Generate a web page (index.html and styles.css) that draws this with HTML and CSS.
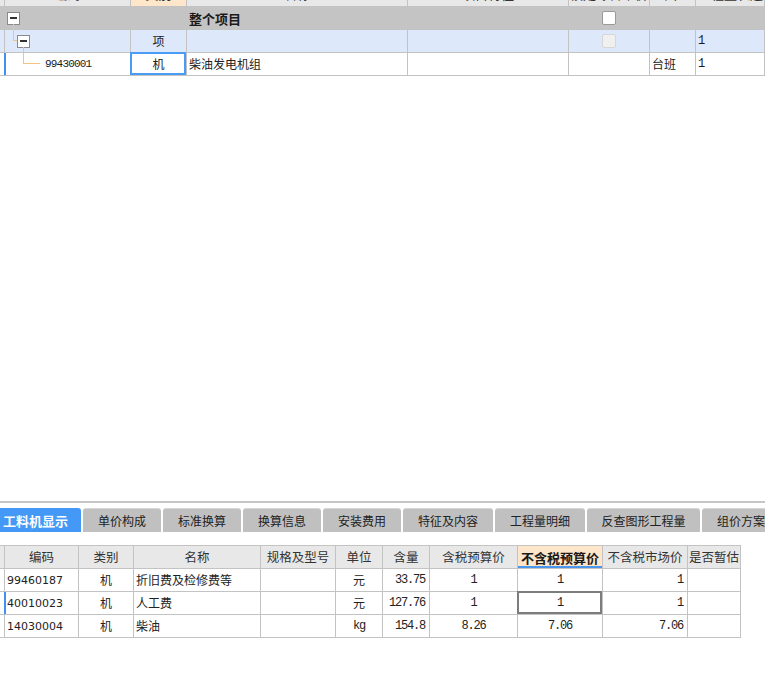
FILE: index.html
```html
<!DOCTYPE html>
<html lang="zh">
<head>
<meta charset="utf-8">
<title>工料机显示</title>
<link rel="stylesheet" href="styles.css">
</head>
<body>
<div class="app">
  <div class="tree-grid">
    <div class="tg-row tg-head">
      <div class="c"></div>
      <div class="c center">编码</div>
      <div class="c center active-col">类别</div>
      <div class="c center">名称</div>
      <div class="c center">项目特征</div>
      <div class="c center">锁定综合单价</div>
      <div class="c center">单位</div>
      <div class="c">工程量表达式</div>
    </div>
    <div class="tg-row tg-group">
      <div class="c"></div>
      <div class="c tree l0"><span class="toggle"></span></div>
      <div class="c"></div>
      <div class="c bold">整个项目</div>
      <div class="c"></div>
      <div class="c center"><span class="chk"></span></div>
      <div class="c"></div>
      <div class="c"></div>
    </div>
    <div class="tg-row tg-sub">
      <div class="c"></div>
      <div class="c tree l1"><span class="elbow e1"></span><span class="toggle"></span></div>
      <div class="c center">项</div>
      <div class="c"></div>
      <div class="c"></div>
      <div class="c center"><span class="chk dis"></span></div>
      <div class="c"></div>
      <div class="c num">1</div>
    </div>
    <div class="tg-row tg-item">
      <div class="c marker"></div>
      <div class="c tree l2"><span class="elbow e2"></span><span class="code-mono">99430001</span></div>
      <div class="c center sel">机</div>
      <div class="c">柴油发电机组</div>
      <div class="c"></div>
      <div class="c"></div>
      <div class="c">台班</div>
      <div class="c num">1</div>
    </div>
  </div>

  <div class="panel">
    <div class="tabs">
      <div class="tab active t1">工料机显示</div>
      <div class="tab w78">单价构成</div>
      <div class="tab w78">标准换算</div>
      <div class="tab w78">换算信息</div>
      <div class="tab w78">安装费用</div>
      <div class="tab w90">特征及内容</div>
      <div class="tab w90">工程量明细</div>
      <div class="tab w113">反查图形工程量</div>
      <div class="tab w78">组价方案</div>
    </div>

    <div class="detail">
      <div class="dg-row dg-head">
        <div class="c"></div>
        <div class="c">编码</div>
        <div class="c">类别</div>
        <div class="c">名称</div>
        <div class="c">规格及型号</div>
        <div class="c">单位</div>
        <div class="c">含量</div>
        <div class="c">含税预算价</div>
        <div class="c hl">不含税预算价</div>
        <div class="c">不含税市场价</div>
        <div class="c">是否暂估</div>
      </div>
      <div class="dg-row">
        <div class="c"></div>
        <div class="c code">99460187</div>
        <div class="c center">机</div>
        <div class="c">折旧费及检修费等</div>
        <div class="c"></div>
        <div class="c center">元</div>
        <div class="c right mono">33.75</div>
        <div class="c center mono">1</div>
        <div class="c center mono">1</div>
        <div class="c right mono">1</div>
        <div class="c"></div>
      </div>
      <div class="dg-row">
        <div class="c marker"></div>
        <div class="c code">40010023</div>
        <div class="c center">机</div>
        <div class="c">人工费</div>
        <div class="c"></div>
        <div class="c center">元</div>
        <div class="c right mono">127.76</div>
        <div class="c center mono">1</div>
        <div class="c center mono focus">1</div>
        <div class="c right mono">1</div>
        <div class="c"></div>
      </div>
      <div class="dg-row">
        <div class="c"></div>
        <div class="c code">14030004</div>
        <div class="c center">机</div>
        <div class="c">柴油</div>
        <div class="c"></div>
        <div class="c center mono">kg</div>
        <div class="c right mono">154.8</div>
        <div class="c center mono">8.26</div>
        <div class="c center mono">7.06</div>
        <div class="c right mono">7.06</div>
        <div class="c"></div>
      </div>
    </div>
  </div>
</div>
</body>
</html>
```

FILE: styles.css
```css
* { box-sizing: border-box; }

html, body {
  margin: 0;
  padding: 0;
  background: #ffffff;
}

body {
  font-family: "Noto Sans CJK SC", "Liberation Sans", sans-serif;
  font-size: 12px;
  color: #222;
  overflow: hidden;
}

.app {
  height: 693px;
  display: flex;
  flex-direction: column;
}

/* ---------- top tree grid ---------- */
.tree-grid {
  flex: none;
  overflow: hidden;
}

.tg-row {
  display: grid;
  grid-template-columns: 5px 126px 56px 221px 161px 81px 46px 1fr;
  height: 23px;
}

.tg-row .c {
  border-right: 1px solid #c3c3c3;
  border-bottom: 1px solid #c3c3c3;
  display: flex;
  align-items: center;
  padding: 0 2px;
  white-space: nowrap;
  overflow: hidden;
  position: relative;
  line-height: 1;
}

.tg-head {
  margin-top: -16px;
  background: #e8e8e8;
  font-size: 13px;
  color: #333;
}
.tg-head .c { padding-bottom: 3px; }
.tg-head .active-col { background: #fde6c9; }

.tg-group { background: #c4c4c4; }
.tg-sub { background: #dde8fb; }
.tg-item { background: #ffffff; }

.center { justify-content: center; }
.bold { font-weight: bold; font-size: 13px; color: #1a1a1a; }

.num {
  font-family: "Liberation Mono", monospace;
  font-size: 12px;
  color: #1a1a1a;
}

.code-mono {
  font-family: "Liberation Mono", monospace;
  font-size: 11px;
  letter-spacing: -0.8px;
}

.tg-row .c.marker { border-right: 2px solid #3f90f0; }

.tree { overflow: visible !important; }
.tree.l0 { padding-left: 2px; }
.tree.l1 { padding-left: 12px; }
.tree.l2 { padding-left: 40px; }

.toggle {
  width: 13px;
  height: 13px;
  border: 1px solid #8a8a8a;
  background: #ffffff;
  display: flex;
  align-items: center;
  justify-content: center;
  flex: none;
}
.toggle::before {
  content: "";
  width: 7px;
  height: 2px;
  background: #333;
}

.elbow {
  position: absolute;
  border-left: 1px solid #f5c27f;
  border-bottom: 1px solid #f5c27f;
  z-index: 2;
}
.elbow.e1 { left: 8px; top: -6px; width: 4px; height: 17px; }
.elbow.e2 { left: 18px; top: -6px; width: 17px; height: 17px; }

.chk {
  width: 14px;
  height: 14px;
  border: 1px solid #9a9a9a;
  border-radius: 2px;
  background: #ffffff;
}
.chk.dis {
  border-color: #d6d6d6;
  background: #f0f0f0;
}

.tg-row .c.sel { overflow: visible; z-index: 3; }
.sel::after {
  content: "";
  position: absolute;
  top: -1px;
  left: -1px;
  right: 0;
  bottom: 0;
  border: 2px solid #4a9bf3;
}

/* ---------- bottom panel ---------- */
.panel {
  margin-top: auto;
  height: 192px;
  border-top: 2px solid #c6c6c6;
  padding-top: 5px;
  flex: none;
}

.tabs {
  display: flex;
  gap: 2px;
  height: 24px;
  overflow: hidden;
  white-space: nowrap;
}

.tab {
  flex: none;
  background: #c0c0c0;
  border-radius: 3px 3px 0 0;
  border-top: 1px solid #d6d6d6;
  color: #222;
  font-size: 12px;
  display: flex;
  align-items: center;
  justify-content: center;
}
.tab.active {
  background: #4499f7;
  border-top-color: #4499f7;
  border-radius: 0 3px 0 0;
  color: #ffffff;
  font-weight: bold;
  font-size: 13px;
  justify-content: flex-start;
  padding-left: 3px;
}
.t1 { width: 81px; }
.w78 { width: 78px; }
.w90 { width: 90px; }
.w113 { width: 113px; }

.detail {
  margin-top: 13px;
  width: 741px;
}

.dg-row {
  display: grid;
  grid-template-columns: 5px 74px 55px 127px 75px 47px 47px 88px 85px 85px 53px;
  height: 23px;
}

.dg-row .c {
  border-right: 1px solid #c3c3c3;
  border-bottom: 1px solid #c3c3c3;
  display: flex;
  align-items: center;
  padding: 0 2px;
  white-space: nowrap;
  overflow: hidden;
  position: relative;
  line-height: 1;
}

.dg-head {
  height: 24px;
  border-top: 1px solid #c3c3c3;
  background: #e8e8e8;
}
.dg-head .c {
  justify-content: center;
  font-size: 12.5px;
  color: #333;
  padding: 0;
}
.dg-head .c.hl {
  background: #fde6c9;
  font-weight: bold;
  font-size: 13px;
  color: #1a1a1a;
  box-shadow: inset 0 -2px 0 #4a95ee;
}

.dg-row .c.marker { border-right: 2px solid #3f90f0; }

.right { justify-content: flex-end; }

.code {
  font-family: "DejaVu Sans", sans-serif;
  font-size: 11px;
  padding-left: 2px !important;
}

.mono {
  font-family: "Liberation Mono", monospace;
  font-size: 12px;
  letter-spacing: -1.2px;
}
.right.mono { padding-right: 4px; }

.dg-row .c.focus { overflow: visible; z-index: 3; }
.focus::after {
  content: "";
  position: absolute;
  top: -1px;
  left: -1px;
  right: 0;
  bottom: 0;
  border: 2px solid #7c7c7c;
}
```
